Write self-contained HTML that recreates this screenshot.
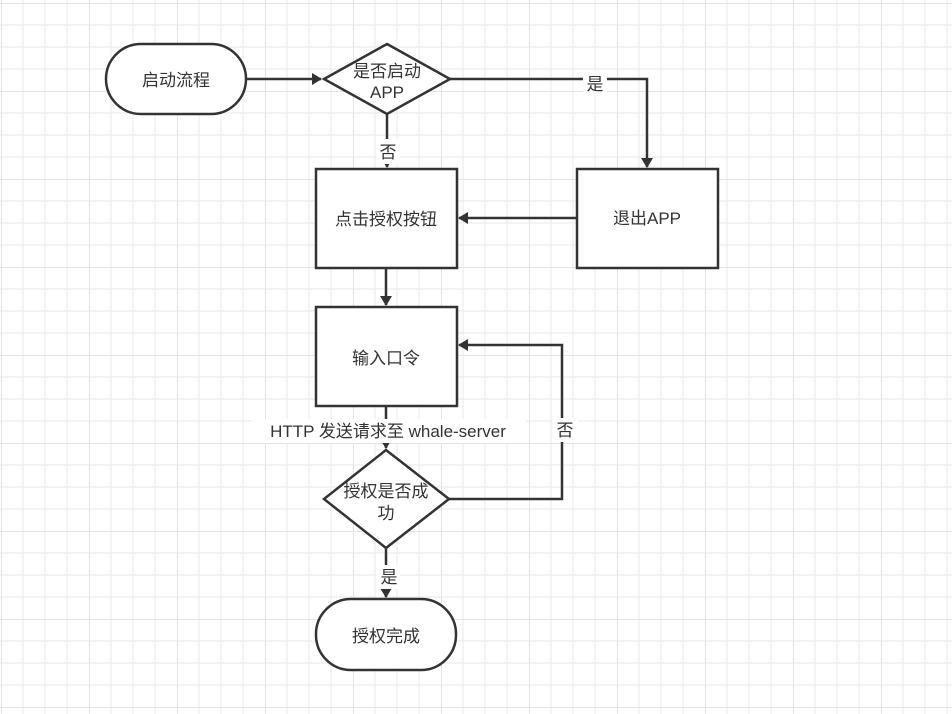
<!DOCTYPE html>
<html><head><meta charset="utf-8"><style>
html,body{margin:0;padding:0;background:#fff;}
svg{display:block;}
text{font-family:"Liberation Sans","Noto Sans CJK SC",sans-serif;font-size:17px;fill:#333;}
</style></head><body>
<svg width="952" height="714" xmlns="http://www.w3.org/2000/svg">
<defs>
<pattern id="g" x="1" y="3" width="88" height="88" patternUnits="userSpaceOnUse">
<path d="M22 0V88M44 0V88M66 0V88M0 22H88M0 44H88M0 66H88" stroke="#ececec" stroke-width="1.2"/>
<path d="M0 0V88M0 0H88" stroke="#e4e4e4" stroke-width="2"/>
</pattern>
<marker id="a" markerWidth="10" markerHeight="12" refX="9" refY="6" orient="auto" markerUnits="userSpaceOnUse">
<path d="M0,0 L10,6 L0,12 Z" fill="#333"/>
</marker>
</defs>
<rect width="952" height="714" fill="#fff"/>
<rect width="952" height="714" fill="url(#g)"/>
<g stroke="#333" stroke-width="2.5" fill="#fff">
<rect x="106" y="44" width="140" height="70" rx="35"/>
<polygon points="387,44 450,79 387,114 324,79"/>
<rect x="316" y="169" width="141" height="99"/>
<rect x="577" y="169" width="141" height="99"/>
<rect x="316" y="307" width="141" height="99"/>
<polygon points="386,450 449,499 386,548 324,499"/>
<rect x="316" y="599" width="140" height="71" rx="35"/>
</g>
<g stroke="#333" stroke-width="2.5" fill="none">
<path d="M246 79H321" marker-end="url(#a)"/>
<path d="M450 79H647V167" marker-end="url(#a)"/>
<path d="M387 114V167" marker-end="url(#a)"/>
<path d="M577 218H459" marker-end="url(#a)"/>
<path d="M386 268V305" marker-end="url(#a)"/>
<path d="M386 406V448" marker-end="url(#a)"/>
<path d="M449 499H562V345H459" marker-end="url(#a)"/>
<path d="M386 548V597" marker-end="url(#a)"/>
</g>
<rect x="583" y="71" width="24" height="24" fill="#fff"/>
<rect x="376" y="139" width="24" height="25" fill="#fff"/>
<rect x="252" y="419" width="274" height="24" fill="#fff"/>
<rect x="552" y="418" width="26" height="24" fill="#fff"/>
<rect x="376" y="565" width="24" height="24" fill="#fff"/>
<g text-anchor="middle">
<text x="176" y="86">启动流程</text>
<text x="387" y="77">是否启动</text>
<text x="387" y="98">APP</text>
<text x="595" y="90">是</text>
<text x="388" y="158">否</text>
<text x="386" y="225">点击授权按钮</text>
<text x="647" y="224">退出APP</text>
<text x="386" y="364">输入口令</text>
<text x="388" y="437">HTTP 发送请求至 whale-server</text>
<text x="565" y="436">否</text>
<text x="386" y="497">授权是否成</text>
<text x="386" y="519">功</text>
<text x="389" y="583">是</text>
<text x="386" y="642">授权完成</text>
</g>
</svg>
</body></html>
